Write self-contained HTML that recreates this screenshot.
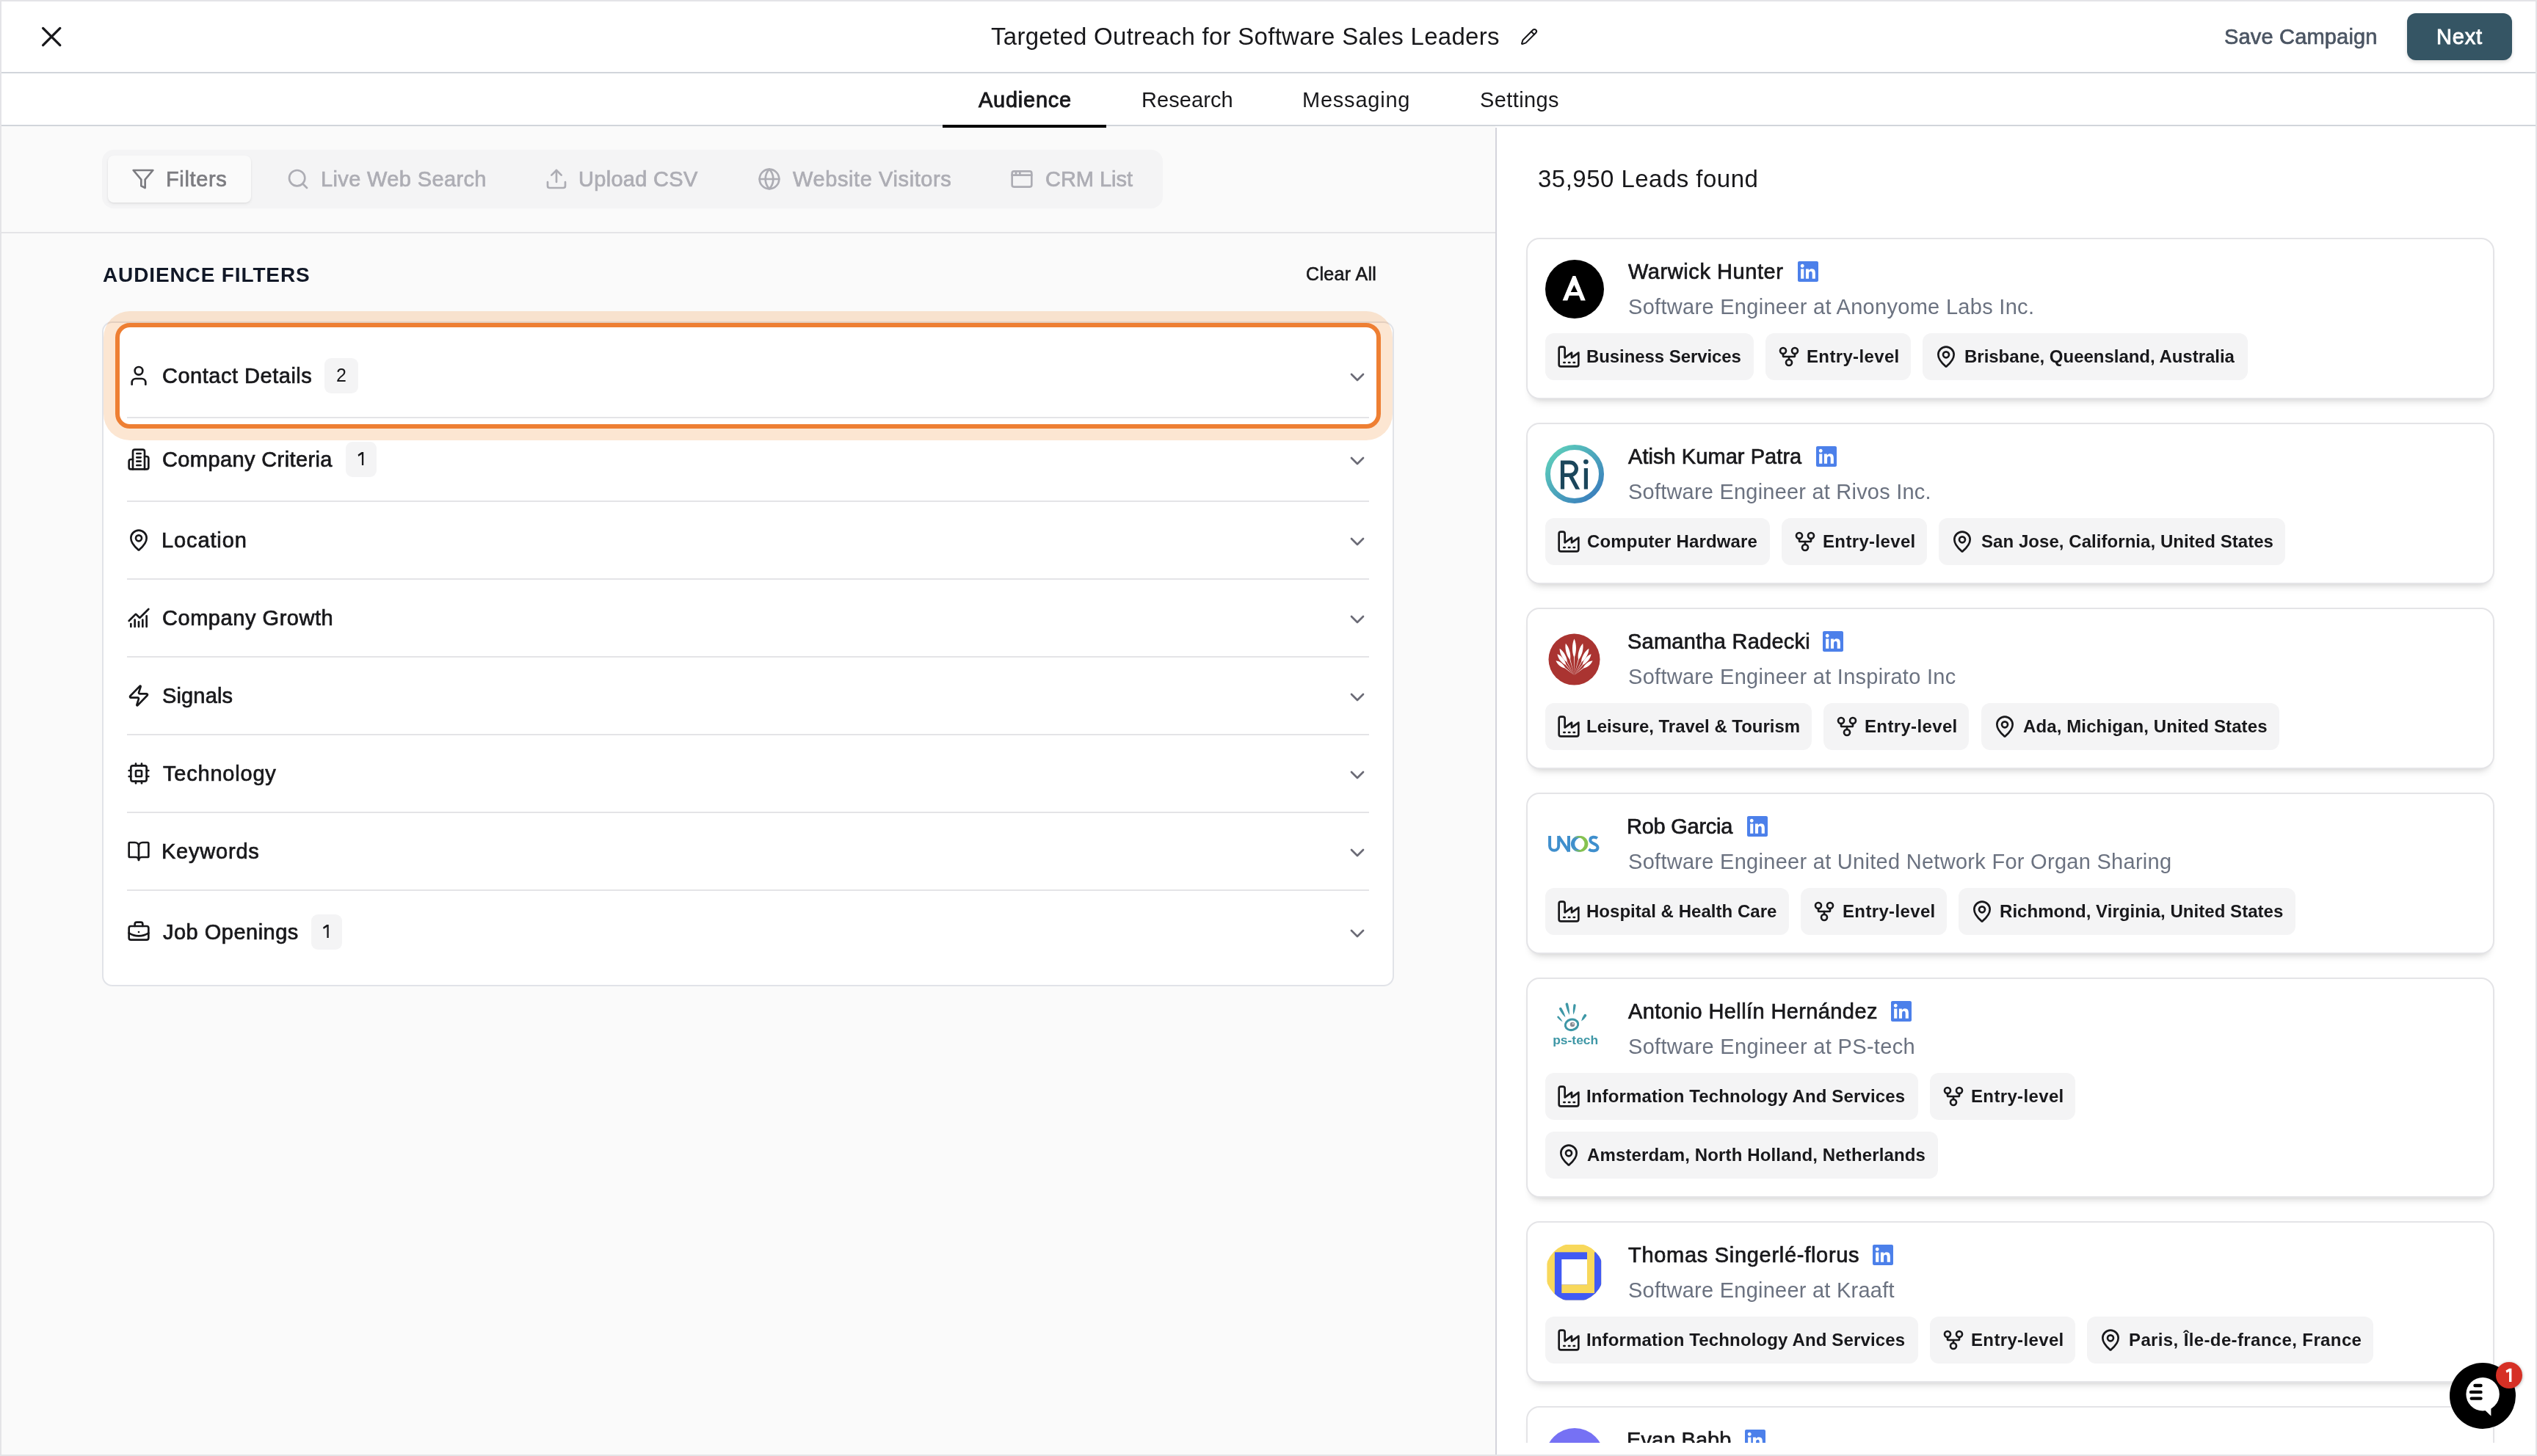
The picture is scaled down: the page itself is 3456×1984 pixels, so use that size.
<!DOCTYPE html><html lang="en"><head><meta charset="utf-8"><title>Campaign Audience</title><style>
*{box-sizing:border-box;margin:0;padding:0}
html,body{width:3456px;height:1984px;overflow:hidden;background:#fff}
body{font-family:"Liberation Sans", sans-serif;position:relative;color:#18181b}
#root{position:absolute;left:0;top:0;width:3456px;height:1984px;transform:translateZ(0)}
#frame{position:absolute;left:0;top:0;width:3456px;height:1984px;border:2px solid #e4e4e7;pointer-events:none;z-index:50}
.t{position:absolute;white-space:nowrap;line-height:1em;display:block;will-change:transform}
.ic{position:absolute;display:block;overflow:visible}
header{position:absolute;left:2px;top:2px;width:3452px;height:98px;background:#fff;border-bottom:2px solid #d1d5db}
nav{position:absolute;left:2px;top:100px;width:3452px;height:72px;background:#fff;border-bottom:2px solid #d1d5db}
.abs{position:absolute;left:0;top:0}
#next{position:absolute;left:3279px;top:18px;width:143px;height:64px;border-radius:12px;background:#355564;box-shadow:0 2px 4px rgba(0,0,0,.10),0 4px 8px -2px rgba(0,0,0,.08)}
#underline{position:absolute;left:1284px;top:170px;width:223px;height:4px;background:#000;z-index:3}
#left{position:absolute;left:2px;top:172px;width:2035px;height:1810px;background:#fafafa}
#divider{position:absolute;left:2037px;top:174px;width:2px;height:1808px;background:#d4d4dc}
#tbline{position:absolute;left:2px;top:316px;width:2035px;height:2px;background:#e4e4e7}
#seg{position:absolute;left:139px;top:204px;width:1445px;height:80px;border-radius:16px;background:#f4f4f5}
#pill{position:absolute;left:147px;top:212px;width:195px;height:64px;border-radius:8px;background:#fafafa;box-shadow:0 2px 4px rgba(0,0,0,.06),0 1px 2px rgba(0,0,0,.05)}
#panel{position:absolute;left:139px;top:438px;width:1760px;height:906px;border:2px solid #e1e3e8;border-radius:14px;background:#fff}
#hl{position:absolute;left:157px;top:440px;width:1724px;height:144px;border:6px solid #ee7f33;border-radius:20px;box-shadow:0 0 0 16px rgba(240,128,32,.2);pointer-events:none}
.sep{position:absolute;left:173px;width:1692px;height:2px;background:#e4e4e7}
.badge{position:absolute;height:48px;border-radius:9px;background:#f4f4f5}
#scroller{position:absolute;left:2039px;top:174px;width:1415px;height:1792px;overflow:hidden;background:#fff}
.card{position:absolute;width:1319px;border:2px solid #e4e4e7;border-radius:18px;background:#fff;box-shadow:0 10px 12px -8px rgba(0,0,0,.16),0 4px 8px -6px rgba(0,0,0,.1)}
.tag{position:absolute;height:64px;border-radius:12px;background:#f4f4f5}
#chat{position:absolute;left:3337px;top:1857px;width:90px;height:90px;z-index:40}
</style></head><body><div id="root">
<header><div class="abs" style="left:-2px;top:-2px">
<svg class="ic" style="left:50px;top:30px" width="40" height="40" viewBox="0 0 40 40" fill="none" stroke="#18181b" stroke-width="3.3" stroke-linecap="round"><path d="M8.6 8.4 31.8 31.6M31.8 8.4 8.6 31.6"/></svg>
<svg class="ic" style="left:2071px;top:38px" width="24" height="24" viewBox="0 0 24 24" fill="none" stroke="#18181b" stroke-width="2" stroke-linecap="round" stroke-linejoin="round"><path d="M21.174 6.812a1 1 0 0 0-3.986-3.987L3.842 16.174a2 2 0 0 0-.5.83l-1.321 4.352a.5.5 0 0 0 .623.622l4.353-1.32a2 2 0 0 0 .83-.497z"/><path d="m15 5 4 4"/></svg>
<span class="t " style="left:1349.70px;top:33px;font-size:33px;color:#18181b;letter-spacing:0.278px;">Targeted Outreach for Software Sales Leaders</span>
<span class="t " style="left:3030.35px;top:36px;font-size:29px;color:#4b5563;letter-spacing:0.174px;-webkit-text-stroke:0.7px #4b5563;">Save Campaign</span>
<div id="next"></div>
<span class="t " style="left:3318.95px;top:36px;font-size:29px;color:#ffffff;letter-spacing:0.843px;-webkit-text-stroke:0.9px #ffffff;">Next</span>
</div></header>
<nav><div class="abs" style="left:-2px;top:-100px">
<span class="t " style="left:1333.45px;top:122px;font-size:29px;color:#18181b;letter-spacing:0.757px;-webkit-text-stroke:0.9px #18181b;">Audience</span>
<span class="t " style="left:1554.60px;top:122px;font-size:29px;color:#18181b;letter-spacing:0.074px;">Research</span>
<span class="t " style="left:1773.70px;top:122px;font-size:29px;color:#18181b;letter-spacing:0.773px;">Messaging</span>
<span class="t " style="left:2015.50px;top:122px;font-size:29px;color:#18181b;letter-spacing:0.388px;">Settings</span>
</div></nav><div id="underline"></div>
<section id="left"></section><div id="tbline"></div><div id="seg"></div><div id="pill"></div>
<svg class="ic" style="left:179px;top:228px" width="32" height="32" viewBox="0 0 24 24" fill="none" stroke="#7c7c81" stroke-width="2" stroke-linecap="round" stroke-linejoin="round"><polygon points="22 3 2 3 10 12.46 10 19 14 21 14 12.46 22 3"/></svg>
<svg class="ic" style="left:390px;top:228px" width="32" height="32" viewBox="0 0 24 24" fill="none" stroke="#adadb4" stroke-width="2" stroke-linecap="round" stroke-linejoin="round"><circle cx="11" cy="11" r="8"/><path d="m21 21-4.3-4.3"/></svg>
<svg class="ic" style="left:741.5px;top:228px" width="32" height="32" viewBox="0 0 24 24" fill="none" stroke="#adadb4" stroke-width="2" stroke-linecap="round" stroke-linejoin="round"><path d="M21 15v4a2 2 0 0 1-2 2H5a2 2 0 0 1-2-2v-4"/><polyline points="17 8 12 3 7 8"/><line x1="12" x2="12" y1="3" y2="15"/></svg>
<svg class="ic" style="left:1031.6px;top:228px" width="32" height="32" viewBox="0 0 24 24" fill="none" stroke="#adadb4" stroke-width="2" stroke-linecap="round" stroke-linejoin="round"><circle cx="12" cy="12" r="10"/><path d="M12 2a14.5 14.5 0 0 0 0 20 14.5 14.5 0 0 0 0-20"/><path d="M2 12h20"/></svg>
<svg class="ic" style="left:1376px;top:228px" width="32" height="32" viewBox="0 0 24 24" fill="none" stroke="#adadb4" stroke-width="2" stroke-linecap="round" stroke-linejoin="round"><rect x="2" y="4" width="20" height="16" rx="2"/><path d="M10 4v4"/><path d="M2 8h20"/><path d="M6 4v4"/></svg>
<span class="t " style="left:226.35px;top:230px;font-size:29px;color:#7c7c81;letter-spacing:0.643px;-webkit-text-stroke:0.7px #7c7c81;">Filters</span>
<span class="t " style="left:436.85px;top:230px;font-size:29px;color:#adadb4;letter-spacing:0.366px;-webkit-text-stroke:0.7px #adadb4;">Live Web Search</span>
<span class="t " style="left:788.35px;top:230px;font-size:29px;color:#adadb4;letter-spacing:0.295px;-webkit-text-stroke:0.7px #adadb4;">Upload CSV</span>
<span class="t " style="left:1080.35px;top:230px;font-size:29px;color:#adadb4;letter-spacing:0.598px;-webkit-text-stroke:0.7px #adadb4;">Website Visitors</span>
<span class="t " style="left:1424.35px;top:230px;font-size:29px;color:#adadb4;letter-spacing:-0.039px;-webkit-text-stroke:0.7px #adadb4;">CRM List</span>
<span class="t " style="left:139.80px;top:361px;font-size:28px;color:#111827;font-weight:700;letter-spacing:0.872px;">AUDIENCE FILTERS</span>
<span class="t " style="left:1778.80px;top:361px;font-size:25px;color:#18181b;letter-spacing:0.348px;-webkit-text-stroke:0.6px #18181b;">Clear All</span>
<div id="panel"></div>
<svg class="ic" style="left:173px;top:496.0px" width="32" height="32" viewBox="0 0 24 24" fill="none" stroke="#18181b" stroke-width="2" stroke-linecap="round" stroke-linejoin="round"><path d="M19 21v-2a4 4 0 0 0-4-4H9a4 4 0 0 0-4 4v2"/><circle cx="12" cy="7" r="4"/></svg>
<svg class="ic" style="left:1833px;top:498.0px" width="32" height="32" viewBox="0 0 24 24" fill="none" stroke="#6b6b76" stroke-width="2" stroke-linecap="round" stroke-linejoin="round"><path d="m6 9 6 6 6-6"/></svg>
<div class="badge" style="left:442.0px;top:488.0px;width:46px"></div>
<div class="sep" style="top:568px"></div>
<svg class="ic" style="left:173px;top:610.0px" width="32" height="32" viewBox="0 0 24 24" fill="none" stroke="#18181b" stroke-width="2" stroke-linecap="round" stroke-linejoin="round"><path d="M6 22V4a2 2 0 0 1 2-2h8a2 2 0 0 1 2 2v18Z"/><path d="M6 12H4a2 2 0 0 0-2 2v6a2 2 0 0 0 2 2h2"/><path d="M18 9h2a2 2 0 0 1 2 2v9a2 2 0 0 1-2 2h-2"/><path d="M10 6h4"/><path d="M10 10h4"/><path d="M10 14h4"/><path d="M10 18h4"/></svg>
<svg class="ic" style="left:1833px;top:612.0px" width="32" height="32" viewBox="0 0 24 24" fill="none" stroke="#6b6b76" stroke-width="2" stroke-linecap="round" stroke-linejoin="round"><path d="m6 9 6 6 6-6"/></svg>
<div class="badge" style="left:471.0px;top:602.0px;width:42px"></div>
<svg class="ic" style="left:0;top:0" width="1" height="1"><polygon fill="#18181b" points="492.60,616.00 495.20,616.00 495.20,634.00 492.90,634.00 492.90,619.10 488.30,621.90 487.60,619.60"/></svg>
<div class="sep" style="top:682px"></div>
<svg class="ic" style="left:173px;top:720.0px" width="32" height="32" viewBox="0 0 24 24" fill="none" stroke="#18181b" stroke-width="2" stroke-linecap="round" stroke-linejoin="round"><path d="M20 10c0 4.993-5.539 10.193-7.399 11.799a1 1 0 0 1-1.202 0C9.539 20.193 4 14.993 4 10a8 8 0 0 1 16 0"/><circle cx="12" cy="10" r="3"/></svg>
<svg class="ic" style="left:1833px;top:722.0px" width="32" height="32" viewBox="0 0 24 24" fill="none" stroke="#6b6b76" stroke-width="2" stroke-linecap="round" stroke-linejoin="round"><path d="m6 9 6 6 6-6"/></svg>
<div class="sep" style="top:788px"></div>
<svg class="ic" style="left:173px;top:826.0px" width="32" height="32" viewBox="0 0 24 24" fill="none" stroke="#18181b" stroke-width="2" stroke-linecap="round" stroke-linejoin="round"><path d="M12 16v5"/><path d="M16 14v7"/><path d="M20 10v11"/><path d="m22 3-8.646 8.646a.5.5 0 0 1-.708 0L9.354 8.354a.5.5 0 0 0-.707 0L2 15"/><path d="M4 18v3"/><path d="M8 14v7"/></svg>
<svg class="ic" style="left:1833px;top:828.0px" width="32" height="32" viewBox="0 0 24 24" fill="none" stroke="#6b6b76" stroke-width="2" stroke-linecap="round" stroke-linejoin="round"><path d="m6 9 6 6 6-6"/></svg>
<div class="sep" style="top:894px"></div>
<svg class="ic" style="left:173px;top:932.0px" width="32" height="32" viewBox="0 0 24 24" fill="none" stroke="#18181b" stroke-width="2" stroke-linecap="round" stroke-linejoin="round"><path d="M4 14a1 1 0 0 1-.78-1.63l9.9-10.2a.5.5 0 0 1 .86.46l-1.92 6.02A1 1 0 0 0 13 10h7a1 1 0 0 1 .78 1.63l-9.9 10.2a.5.5 0 0 1-.86-.46l1.92-6.02A1 1 0 0 0 11 14z"/></svg>
<svg class="ic" style="left:1833px;top:934.0px" width="32" height="32" viewBox="0 0 24 24" fill="none" stroke="#6b6b76" stroke-width="2" stroke-linecap="round" stroke-linejoin="round"><path d="m6 9 6 6 6-6"/></svg>
<div class="sep" style="top:1000px"></div>
<svg class="ic" style="left:173px;top:1038.0px" width="32" height="32" viewBox="0 0 24 24" fill="none" stroke="#18181b" stroke-width="2" stroke-linecap="round" stroke-linejoin="round"><rect width="16" height="16" x="4" y="4" rx="2"/><rect width="6" height="6" x="9" y="9" rx="1"/><path d="M15 2v2"/><path d="M15 20v2"/><path d="M2 15h2"/><path d="M2 9h2"/><path d="M20 15h2"/><path d="M20 9h2"/><path d="M9 2v2"/><path d="M9 20v2"/></svg>
<svg class="ic" style="left:1833px;top:1040.0px" width="32" height="32" viewBox="0 0 24 24" fill="none" stroke="#6b6b76" stroke-width="2" stroke-linecap="round" stroke-linejoin="round"><path d="m6 9 6 6 6-6"/></svg>
<div class="sep" style="top:1106px"></div>
<svg class="ic" style="left:173px;top:1144.0px" width="32" height="32" viewBox="0 0 24 24" fill="none" stroke="#18181b" stroke-width="2" stroke-linecap="round" stroke-linejoin="round"><path d="M12 7v14"/><path d="M3 18a1 1 0 0 1-1-1V4a1 1 0 0 1 1-1h5a4 4 0 0 1 4 4 4 4 0 0 1 4-4h5a1 1 0 0 1 1 1v13a1 1 0 0 1-1 1h-6a3 3 0 0 0-3 3 3 3 0 0 0-3-3z"/></svg>
<svg class="ic" style="left:1833px;top:1146.0px" width="32" height="32" viewBox="0 0 24 24" fill="none" stroke="#6b6b76" stroke-width="2" stroke-linecap="round" stroke-linejoin="round"><path d="m6 9 6 6 6-6"/></svg>
<div class="sep" style="top:1212px"></div>
<svg class="ic" style="left:173px;top:1254.0px" width="32" height="32" viewBox="0 0 24 24" fill="none" stroke="#18181b" stroke-width="2" stroke-linecap="round" stroke-linejoin="round"><path d="M12 12h.01"/><path d="M16 6V4a2 2 0 0 0-2-2h-4a2 2 0 0 0-2 2v2"/><path d="M22 13a18.15 18.15 0 0 1-20 0"/><rect width="20" height="14" x="2" y="6" rx="2"/></svg>
<svg class="ic" style="left:1833px;top:1256.0px" width="32" height="32" viewBox="0 0 24 24" fill="none" stroke="#6b6b76" stroke-width="2" stroke-linecap="round" stroke-linejoin="round"><path d="m6 9 6 6 6-6"/></svg>
<div class="badge" style="left:423.5px;top:1246.0px;width:42px"></div>
<svg class="ic" style="left:0;top:0" width="1" height="1"><polygon fill="#18181b" points="445.10,1260.00 447.70,1260.00 447.70,1278.00 445.40,1278.00 445.40,1263.10 440.80,1265.90 440.10,1263.60"/></svg>
<span class="t " style="left:221.35px;top:498px;font-size:29px;color:#18181b;letter-spacing:0.511px;-webkit-text-stroke:0.7px #18181b;">Contact Details</span>
<span class="t " style="left:457.80px;top:499px;font-size:25px;color:#18181b;">2</span>
<span class="t " style="left:221.35px;top:612px;font-size:29px;color:#18181b;letter-spacing:0.387px;-webkit-text-stroke:0.7px #18181b;">Company Criteria</span>
<span class="t " style="left:220.35px;top:722px;font-size:29px;color:#18181b;letter-spacing:0.884px;-webkit-text-stroke:0.7px #18181b;">Location</span>
<span class="t " style="left:221.35px;top:828px;font-size:29px;color:#18181b;letter-spacing:0.545px;-webkit-text-stroke:0.7px #18181b;">Company Growth</span>
<span class="t " style="left:221.35px;top:934px;font-size:29px;color:#18181b;letter-spacing:0.148px;-webkit-text-stroke:0.7px #18181b;">Signals</span>
<span class="t " style="left:222.35px;top:1040px;font-size:29px;color:#18181b;letter-spacing:0.787px;-webkit-text-stroke:0.7px #18181b;">Technology</span>
<span class="t " style="left:220.35px;top:1146px;font-size:29px;color:#18181b;letter-spacing:0.782px;-webkit-text-stroke:0.7px #18181b;">Keywords</span>
<span class="t " style="left:222.35px;top:1256px;font-size:29px;color:#18181b;letter-spacing:0.486px;-webkit-text-stroke:0.7px #18181b;">Job Openings</span>
<div id="hl"></div>
<div id="divider"></div><section id="scroller">
<span class="t " style="left:55.90px;top:53px;font-size:33px;color:#18181b;letter-spacing:0.476px;">35,950 Leads found</span>
<div class="card" style="left:40px;top:150px;height:220px"></div>
<svg class="ic" style="left:66px;top:180px" width="80" height="80" viewBox="0 0 80 80"><circle cx="40" cy="40" r="40" fill="#000"/><path fill="#fff" fill-rule="evenodd" d="M23.6 55.4 37.5 21.9h3.8l13.5 33.500h-6.3l-2.6-6.700H32.7l-2.4 6.700zM34.700 44h9.3l-4.600-9.800z"/></svg>
<svg class="ic" style="left:410.0px;top:182px" width="28" height="28" viewBox="0 0 24 24"><rect x="1" y="1" width="22" height="22" fill="#fff"/><path fill="#4c80ea" d="M20.447 20.452h-3.554v-5.569c0-1.328-.027-3.037-1.852-3.037-1.853 0-2.136 1.445-2.136 2.939v5.667H9.351V9h3.414v1.561h.046c.477-.9 1.637-1.85 3.37-1.85 3.601 0 4.267 2.37 4.267 5.455v6.286zM5.337 7.433c-1.144 0-2.063-.926-2.063-2.065 0-1.138.92-2.063 2.063-2.063 1.14 0 2.064.925 2.064 2.063 0 1.139-.925 2.065-2.064 2.065zm1.782 13.019H3.555V9h3.564v11.452zM22.225 0H1.771C.792 0 0 .774 0 1.729v20.542C0 23.227.792 24 1.771 24h20.451C23.2 24 24 23.227 24 22.271V1.729C24 .774 23.2 0 22.222 0h.003z"/></svg>
<div class="tag" style="left:66.0px;top:280px;width:283.6px"></div>
<svg class="ic" style="left:82px;top:296px" width="32" height="32" viewBox="0 0 24 24" fill="none" stroke="#18181b" stroke-width="2" stroke-linecap="round" stroke-linejoin="round"><path d="M2 20a2 2 0 0 0 2 2h16a2 2 0 0 0 2-2V8l-7 5V8l-7 5V4a2 2 0 0 0-2-2H4a2 2 0 0 0-2 2Z"/><path d="M17 18h1"/><path d="M12 18h1"/><path d="M7 18h1"/></svg>
<div class="tag" style="left:365.8px;top:280px;width:198.4px"></div>
<svg class="ic" style="left:381.8000000000002px;top:296px" width="32" height="32" viewBox="0 0 24 24" fill="none" stroke="#18181b" stroke-width="2" stroke-linecap="round" stroke-linejoin="round"><circle cx="12" cy="18" r="3"/><circle cx="6" cy="6" r="3"/><circle cx="18" cy="6" r="3"/><path d="M18 9v2c0 .6-.4 1-1 1H7c-.6 0-1-.4-1-1V9"/><path d="M12 12v3"/></svg>
<div class="tag" style="left:580.4px;top:280px;width:442.5px"></div>
<svg class="ic" style="left:596.4000000000001px;top:296px" width="32" height="32" viewBox="0 0 24 24" fill="none" stroke="#18181b" stroke-width="2" stroke-linecap="round" stroke-linejoin="round"><path d="M20 10c0 4.993-5.539 10.193-7.399 11.799a1 1 0 0 1-1.202 0C9.539 20.193 4 14.993 4 10a8 8 0 0 1 16 0"/><circle cx="12" cy="10" r="3"/></svg>
<span class="t " style="left:179.05px;top:182px;font-size:29px;color:#18181b;letter-spacing:0.569px;-webkit-text-stroke:0.7px #18181b;">Warwick Hunter</span>
<span class="t " style="left:178.50px;top:230px;font-size:29px;color:#6b7280;letter-spacing:0.297px;">Software Engineer at Anonyome Labs Inc.</span>
<span class="t " style="left:122.30px;top:300px;font-size:24px;color:#18181b;font-weight:700;letter-spacing:-0.074px;">Business Services</span>
<span class="t " style="left:422.10px;top:300px;font-size:24px;color:#18181b;font-weight:700;letter-spacing:0.355px;">Entry-level</span>
<span class="t " style="left:636.70px;top:300px;font-size:24px;color:#18181b;font-weight:700;letter-spacing:-0.020px;">Brisbane, Queensland, Australia</span>
<div class="card" style="left:40px;top:402px;height:220px"></div>
<svg class="ic" style="left:66px;top:432px" width="80" height="80" viewBox="0 0 80 80"><defs><linearGradient id="rg" x1="0.1" y1="0.1" x2="0.9" y2="0.95"><stop offset="0" stop-color="#5ccbbb"/><stop offset="1" stop-color="#3a7ebd"/></linearGradient></defs><circle cx="40" cy="40" r="36.5" fill="#fff" stroke="url(#rg)" stroke-width="7"/><clipPath id="rc"><rect x="0" y="0" width="80" height="60.8"/></clipPath><g fill="none" stroke="#1b465b" stroke-width="5.2" clip-path="url(#rc)"><path d="M23.5 60.8V21.6M23.5 24.2h10.3a8.6 8.6 0 0 1 0 17.2H23.5M34 41.6l12 22.400M55.4 31.9v28.9"/></g><circle cx="55.4" cy="23.2" r="3.3" fill="#1b465b"/></svg>
<svg class="ic" style="left:434.9px;top:434px" width="28" height="28" viewBox="0 0 24 24"><rect x="1" y="1" width="22" height="22" fill="#fff"/><path fill="#4c80ea" d="M20.447 20.452h-3.554v-5.569c0-1.328-.027-3.037-1.852-3.037-1.853 0-2.136 1.445-2.136 2.939v5.667H9.351V9h3.414v1.561h.046c.477-.9 1.637-1.85 3.37-1.85 3.601 0 4.267 2.37 4.267 5.455v6.286zM5.337 7.433c-1.144 0-2.063-.926-2.063-2.065 0-1.138.92-2.063 2.063-2.063 1.14 0 2.064.925 2.064 2.063 0 1.139-.925 2.065-2.064 2.065zm1.782 13.019H3.555V9h3.564v11.452zM22.225 0H1.771C.792 0 0 .774 0 1.729v20.542C0 23.227.792 24 1.771 24h20.451C23.2 24 24 23.227 24 22.271V1.729C24 .774 23.2 0 22.222 0h.003z"/></svg>
<div class="tag" style="left:66.0px;top:532px;width:305.6px"></div>
<svg class="ic" style="left:82px;top:548px" width="32" height="32" viewBox="0 0 24 24" fill="none" stroke="#18181b" stroke-width="2" stroke-linecap="round" stroke-linejoin="round"><path d="M2 20a2 2 0 0 0 2 2h16a2 2 0 0 0 2-2V8l-7 5V8l-7 5V4a2 2 0 0 0-2-2H4a2 2 0 0 0-2 2Z"/><path d="M17 18h1"/><path d="M12 18h1"/><path d="M7 18h1"/></svg>
<div class="tag" style="left:387.8px;top:532px;width:198.4px"></div>
<svg class="ic" style="left:403.8000000000002px;top:548px" width="32" height="32" viewBox="0 0 24 24" fill="none" stroke="#18181b" stroke-width="2" stroke-linecap="round" stroke-linejoin="round"><circle cx="12" cy="18" r="3"/><circle cx="6" cy="6" r="3"/><circle cx="18" cy="6" r="3"/><path d="M18 9v2c0 .6-.4 1-1 1H7c-.6 0-1-.4-1-1V9"/><path d="M12 12v3"/></svg>
<div class="tag" style="left:602.4px;top:532px;width:471.6px"></div>
<svg class="ic" style="left:618.4000000000001px;top:548px" width="32" height="32" viewBox="0 0 24 24" fill="none" stroke="#18181b" stroke-width="2" stroke-linecap="round" stroke-linejoin="round"><path d="M20 10c0 4.993-5.539 10.193-7.399 11.799a1 1 0 0 1-1.202 0C9.539 20.193 4 14.993 4 10a8 8 0 0 1 16 0"/><circle cx="12" cy="10" r="3"/></svg>
<span class="t " style="left:179.05px;top:434px;font-size:29px;color:#18181b;letter-spacing:0.057px;-webkit-text-stroke:0.7px #18181b;">Atish Kumar Patra</span>
<span class="t " style="left:178.50px;top:482px;font-size:29px;color:#6b7280;letter-spacing:0.212px;">Software Engineer at Rivos Inc.</span>
<span class="t " style="left:123.30px;top:552px;font-size:24px;color:#18181b;font-weight:700;letter-spacing:0.160px;">Computer Hardware</span>
<span class="t " style="left:444.10px;top:552px;font-size:24px;color:#18181b;font-weight:700;letter-spacing:0.355px;">Entry-level</span>
<span class="t " style="left:659.70px;top:552px;font-size:24px;color:#18181b;font-weight:700;letter-spacing:0.054px;">San Jose, California, United States</span>
<div class="card" style="left:40px;top:654px;height:220px"></div>
<svg class="ic" style="left:66px;top:684px" width="80" height="80" viewBox="0 0 80 80"><circle cx="39.5" cy="40.6" r="35" fill="#aa3431"/><g fill="#fff" transform="translate(39.5 62.1)"><path transform="rotate(0)" d="M0 0L-0.45 -24.75C-3.24 -31.68 -3.24 -42.57 0 -49.50C3.24 -42.57 3.24 -31.68 0.45 -24.75Z"/><path transform="rotate(15.1)" d="M0 0L-0.45 -22.40C-3.24 -28.67 -3.24 -38.53 0 -44.80C3.24 -38.53 3.24 -28.67 0.45 -22.40Z"/><path transform="rotate(-15.1)" d="M0 0L-0.45 -22.40C-3.24 -28.67 -3.24 -38.53 0 -44.80C3.24 -38.53 3.24 -28.67 0.45 -22.40Z"/><path transform="rotate(28.7)" d="M0 0L-0.45 -20.75C-3.24 -26.56 -3.24 -35.69 0 -41.50C3.24 -35.69 3.24 -26.56 0.45 -20.75Z"/><path transform="rotate(-28.7)" d="M0 0L-0.45 -20.75C-3.24 -26.56 -3.24 -35.69 0 -41.50C3.24 -35.69 3.24 -26.56 0.45 -20.75Z"/><path transform="rotate(38.6)" d="M0 0L-0.45 -18.45C-3.10 -23.62 -3.10 -31.73 0 -36.90C3.10 -31.73 3.10 -23.62 0.45 -18.45Z"/><path transform="rotate(-38.6)" d="M0 0L-0.45 -18.45C-3.10 -23.62 -3.10 -31.73 0 -36.90C3.10 -31.73 3.10 -23.62 0.45 -18.45Z"/><path transform="rotate(51.5)" d="M0 0L-0.45 -16.00C-2.84 -20.48 -2.84 -27.52 0 -32.00C2.84 -27.52 2.84 -20.48 0.45 -16.00Z"/><path transform="rotate(-51.5)" d="M0 0L-0.45 -16.00C-2.84 -20.48 -2.84 -27.52 0 -32.00C2.84 -27.52 2.84 -20.48 0.45 -16.00Z"/></g></svg>
<svg class="ic" style="left:443.7px;top:686px" width="28" height="28" viewBox="0 0 24 24"><rect x="1" y="1" width="22" height="22" fill="#fff"/><path fill="#4c80ea" d="M20.447 20.452h-3.554v-5.569c0-1.328-.027-3.037-1.852-3.037-1.853 0-2.136 1.445-2.136 2.939v5.667H9.351V9h3.414v1.561h.046c.477-.9 1.637-1.85 3.37-1.85 3.601 0 4.267 2.37 4.267 5.455v6.286zM5.337 7.433c-1.144 0-2.063-.926-2.063-2.065 0-1.138.92-2.063 2.063-2.063 1.14 0 2.064.925 2.064 2.063 0 1.139-.925 2.065-2.064 2.065zm1.782 13.019H3.555V9h3.564v11.452zM22.225 0H1.771C.792 0 0 .774 0 1.729v20.542C0 23.227.792 24 1.771 24h20.451C23.2 24 24 23.227 24 22.271V1.729C24 .774 23.2 0 22.222 0h.003z"/></svg>
<div class="tag" style="left:66.0px;top:784px;width:362.8px"></div>
<svg class="ic" style="left:82px;top:800px" width="32" height="32" viewBox="0 0 24 24" fill="none" stroke="#18181b" stroke-width="2" stroke-linecap="round" stroke-linejoin="round"><path d="M2 20a2 2 0 0 0 2 2h16a2 2 0 0 0 2-2V8l-7 5V8l-7 5V4a2 2 0 0 0-2-2H4a2 2 0 0 0-2 2Z"/><path d="M17 18h1"/><path d="M12 18h1"/><path d="M7 18h1"/></svg>
<div class="tag" style="left:445.0px;top:784px;width:198.4px"></div>
<svg class="ic" style="left:461.0px;top:800px" width="32" height="32" viewBox="0 0 24 24" fill="none" stroke="#18181b" stroke-width="2" stroke-linecap="round" stroke-linejoin="round"><circle cx="12" cy="18" r="3"/><circle cx="6" cy="6" r="3"/><circle cx="18" cy="6" r="3"/><path d="M18 9v2c0 .6-.4 1-1 1H7c-.6 0-1-.4-1-1V9"/><path d="M12 12v3"/></svg>
<div class="tag" style="left:659.6px;top:784px;width:406.2px"></div>
<svg class="ic" style="left:675.5999999999999px;top:800px" width="32" height="32" viewBox="0 0 24 24" fill="none" stroke="#18181b" stroke-width="2" stroke-linecap="round" stroke-linejoin="round"><path d="M20 10c0 4.993-5.539 10.193-7.399 11.799a1 1 0 0 1-1.202 0C9.539 20.193 4 14.993 4 10a8 8 0 0 1 16 0"/><circle cx="12" cy="10" r="3"/></svg>
<span class="t " style="left:178.05px;top:686px;font-size:29px;color:#18181b;letter-spacing:0.248px;-webkit-text-stroke:0.7px #18181b;">Samantha Radecki</span>
<span class="t " style="left:178.50px;top:734px;font-size:29px;color:#6b7280;letter-spacing:0.283px;">Software Engineer at Inspirato Inc</span>
<span class="t " style="left:122.30px;top:804px;font-size:24px;color:#18181b;font-weight:700;letter-spacing:-0.022px;">Leisure, Travel &amp; Tourism</span>
<span class="t " style="left:501.30px;top:804px;font-size:24px;color:#18181b;font-weight:700;letter-spacing:0.355px;">Entry-level</span>
<span class="t " style="left:716.90px;top:804px;font-size:24px;color:#18181b;font-weight:700;letter-spacing:0.117px;">Ada, Michigan, United States</span>
<div class="card" style="left:40px;top:906px;height:220px"></div>
<svg class="ic" style="left:66px;top:936px" width="80" height="80" viewBox="0 0 80 80"><defs><mask id="mb" maskUnits="userSpaceOnUse" x="0" y="0" width="80" height="80"><rect width="80" height="80" fill="#fff"/><circle cx="48.6" cy="39.9" r="8.4" fill="#000"/></mask><mask id="mg" maskUnits="userSpaceOnUse" x="0" y="0" width="80" height="80"><rect width="80" height="80" fill="#fff"/><circle cx="44.7" cy="39.9" r="8.800" fill="#000"/></mask></defs><g fill="none" stroke="#3f8fcd" stroke-width="4"><path d="M6.1 29v13.7a6.05 6.05 0 0 0 12.1 0V29M18.2 29.6 32 50.2M32 29v21.8"/><path d="M70.9 32.2C68.100 30 61.3 29.6 61.3 34.7c0 5.4 10.200 4.4 10.200 10.3 0 5.2-8.400 5.4-12.200 2.300"/></g><circle cx="45.8" cy="39.9" r="10.9" fill="#3f8fcd" mask="url(#mb)"/><circle cx="47.5" cy="39.9" r="10.9" fill="#86c250" mask="url(#mg)"/></svg>
<svg class="ic" style="left:341.3px;top:938px" width="28" height="28" viewBox="0 0 24 24"><rect x="1" y="1" width="22" height="22" fill="#fff"/><path fill="#4c80ea" d="M20.447 20.452h-3.554v-5.569c0-1.328-.027-3.037-1.852-3.037-1.853 0-2.136 1.445-2.136 2.939v5.667H9.351V9h3.414v1.561h.046c.477-.9 1.637-1.85 3.37-1.85 3.601 0 4.267 2.37 4.267 5.455v6.286zM5.337 7.433c-1.144 0-2.063-.926-2.063-2.065 0-1.138.92-2.063 2.063-2.063 1.14 0 2.064.925 2.064 2.063 0 1.139-.925 2.065-2.064 2.065zm1.782 13.019H3.555V9h3.564v11.452zM22.225 0H1.771C.792 0 0 .774 0 1.729v20.542C0 23.227.792 24 1.771 24h20.451C23.2 24 24 23.227 24 22.271V1.729C24 .774 23.2 0 22.222 0h.003z"/></svg>
<div class="tag" style="left:66.0px;top:1036px;width:332.0px"></div>
<svg class="ic" style="left:82px;top:1052px" width="32" height="32" viewBox="0 0 24 24" fill="none" stroke="#18181b" stroke-width="2" stroke-linecap="round" stroke-linejoin="round"><path d="M2 20a2 2 0 0 0 2 2h16a2 2 0 0 0 2-2V8l-7 5V8l-7 5V4a2 2 0 0 0-2-2H4a2 2 0 0 0-2 2Z"/><path d="M17 18h1"/><path d="M12 18h1"/><path d="M7 18h1"/></svg>
<div class="tag" style="left:414.2px;top:1036px;width:198.4px"></div>
<svg class="ic" style="left:430.1999999999998px;top:1052px" width="32" height="32" viewBox="0 0 24 24" fill="none" stroke="#18181b" stroke-width="2" stroke-linecap="round" stroke-linejoin="round"><circle cx="12" cy="18" r="3"/><circle cx="6" cy="6" r="3"/><circle cx="18" cy="6" r="3"/><path d="M18 9v2c0 .6-.4 1-1 1H7c-.6 0-1-.4-1-1V9"/><path d="M12 12v3"/></svg>
<div class="tag" style="left:628.8px;top:1036px;width:459.0px"></div>
<svg class="ic" style="left:644.7999999999997px;top:1052px" width="32" height="32" viewBox="0 0 24 24" fill="none" stroke="#18181b" stroke-width="2" stroke-linecap="round" stroke-linejoin="round"><path d="M20 10c0 4.993-5.539 10.193-7.399 11.799a1 1 0 0 1-1.202 0C9.539 20.193 4 14.993 4 10a8 8 0 0 1 16 0"/><circle cx="12" cy="10" r="3"/></svg>
<span class="t " style="left:177.05px;top:938px;font-size:29px;color:#18181b;letter-spacing:-0.249px;-webkit-text-stroke:0.7px #18181b;">Rob Garcia</span>
<span class="t " style="left:178.50px;top:986px;font-size:29px;color:#6b7280;letter-spacing:0.284px;">Software Engineer at United Network For Organ Sharing</span>
<span class="t " style="left:122.30px;top:1056px;font-size:24px;color:#18181b;font-weight:700;letter-spacing:0.030px;">Hospital &amp; Health Care</span>
<span class="t " style="left:470.50px;top:1056px;font-size:24px;color:#18181b;font-weight:700;letter-spacing:0.355px;">Entry-level</span>
<span class="t " style="left:685.10px;top:1056px;font-size:24px;color:#18181b;font-weight:700;letter-spacing:0.044px;">Richmond, Virginia, United States</span>
<div class="card" style="left:40px;top:1158px;height:300px"></div>
<svg class="ic" style="left:66px;top:1188px" width="80" height="80" viewBox="0 0 80 80"><g fill="#3e97a6"><path d="M16.64 24.68A1.30 1.30 0 0 1 18.56 22.92Q22.39 27.04 23.70 30.50Q20.37 28.87 16.64 24.68Z"/><path d="M19.23 13.48A1.80 1.80 0 0 1 22.37 11.72Q26.54 18.93 27.40 24.30Q23.25 20.78 19.23 13.48Z"/><path d="M27.65 6.72A1.80 1.80 0 0 1 31.15 5.88Q33.41 14.91 32.90 20.90Q29.73 15.79 27.65 6.72Z"/><path d="M38.36 7.69A1.65 1.65 0 0 1 41.64 8.11Q40.73 15.99 38.40 20.60Q37.29 15.56 38.36 7.69Z"/><path d="M52.83 20.63A1.90 1.90 0 0 1 55.97 22.77Q52.76 27.66 49.10 29.50Q49.46 25.41 52.83 20.63Z"/></g><ellipse cx="36" cy="34.3" rx="8.8" ry="7.2" transform="rotate(-14 36 34.300)" fill="#fff" stroke="#3e97a6" stroke-width="3"/><circle cx="37" cy="34" r="3.200" fill="#8a8d94"/><circle cx="37.9" cy="32.9" r="1" fill="#e8e8ea"/><text x="10.2" y="60.7" font-family='"Liberation Sans", sans-serif' font-weight="700" font-size="17.2" fill="#3e97a6" textLength="62" lengthAdjust="spacingAndGlyphs">ps-tech</text></svg>
<svg class="ic" style="left:536.7px;top:1190px" width="28" height="28" viewBox="0 0 24 24"><rect x="1" y="1" width="22" height="22" fill="#fff"/><path fill="#4c80ea" d="M20.447 20.452h-3.554v-5.569c0-1.328-.027-3.037-1.852-3.037-1.853 0-2.136 1.445-2.136 2.939v5.667H9.351V9h3.414v1.561h.046c.477-.9 1.637-1.85 3.37-1.85 3.601 0 4.267 2.37 4.267 5.455v6.286zM5.337 7.433c-1.144 0-2.063-.926-2.063-2.065 0-1.138.92-2.063 2.063-2.063 1.14 0 2.064.925 2.064 2.063 0 1.139-.925 2.065-2.064 2.065zm1.782 13.019H3.555V9h3.564v11.452zM22.225 0H1.771C.792 0 0 .774 0 1.729v20.542C0 23.227.792 24 1.771 24h20.451C23.2 24 24 23.227 24 22.271V1.729C24 .774 23.2 0 22.222 0h.003z"/></svg>
<div class="tag" style="left:66.0px;top:1288px;width:507.6px"></div>
<svg class="ic" style="left:82px;top:1304px" width="32" height="32" viewBox="0 0 24 24" fill="none" stroke="#18181b" stroke-width="2" stroke-linecap="round" stroke-linejoin="round"><path d="M2 20a2 2 0 0 0 2 2h16a2 2 0 0 0 2-2V8l-7 5V8l-7 5V4a2 2 0 0 0-2-2H4a2 2 0 0 0-2 2Z"/><path d="M17 18h1"/><path d="M12 18h1"/><path d="M7 18h1"/></svg>
<div class="tag" style="left:589.8px;top:1288px;width:198.4px"></div>
<svg class="ic" style="left:605.8000000000002px;top:1304px" width="32" height="32" viewBox="0 0 24 24" fill="none" stroke="#18181b" stroke-width="2" stroke-linecap="round" stroke-linejoin="round"><circle cx="12" cy="18" r="3"/><circle cx="6" cy="6" r="3"/><circle cx="18" cy="6" r="3"/><path d="M18 9v2c0 .6-.4 1-1 1H7c-.6 0-1-.4-1-1V9"/><path d="M12 12v3"/></svg>
<div class="tag" style="left:66.0px;top:1368px;width:534.5px"></div>
<svg class="ic" style="left:82px;top:1384px" width="32" height="32" viewBox="0 0 24 24" fill="none" stroke="#18181b" stroke-width="2" stroke-linecap="round" stroke-linejoin="round"><path d="M20 10c0 4.993-5.539 10.193-7.399 11.799a1 1 0 0 1-1.202 0C9.539 20.193 4 14.993 4 10a8 8 0 0 1 16 0"/><circle cx="12" cy="10" r="3"/></svg>
<span class="t " style="left:179.05px;top:1190px;font-size:29px;color:#18181b;letter-spacing:0.388px;-webkit-text-stroke:0.7px #18181b;">Antonio Hellín Hernández</span>
<span class="t " style="left:178.50px;top:1238px;font-size:29px;color:#6b7280;letter-spacing:0.318px;">Software Engineer at PS-tech</span>
<span class="t " style="left:122.30px;top:1308px;font-size:24px;color:#18181b;font-weight:700;letter-spacing:0.137px;">Information Technology And Services</span>
<span class="t " style="left:646.10px;top:1308px;font-size:24px;color:#18181b;font-weight:700;letter-spacing:0.355px;">Entry-level</span>
<span class="t " style="left:123.30px;top:1388px;font-size:24px;color:#18181b;font-weight:700;letter-spacing:0.133px;">Amsterdam, North Holland, Netherlands</span>
<div class="card" style="left:40px;top:1490px;height:220px"></div>
<svg class="ic" style="left:66px;top:1520px" width="80" height="80" viewBox="0 0 80 80"><defs><clipPath id="kc"><circle cx="40" cy="40" r="40"/></clipPath></defs><g clip-path="url(#kc)"><rect x="2.4" y="2" width="73.8" height="75.6" fill="#f8d85b"/><rect x="12.9" y="12.3" width="63.3" height="65.3" fill="#415af4"/><rect x="57" y="2" width="10" height="66" fill="#f8d85b"/><rect x="22.3" y="56.3" width="44.7" height="11.7" fill="#f8d85b"/><rect x="22.3" y="22" width="34.7" height="34.3" fill="#fff"/></g></svg>
<svg class="ic" style="left:512.0px;top:1522px" width="28" height="28" viewBox="0 0 24 24"><rect x="1" y="1" width="22" height="22" fill="#fff"/><path fill="#4c80ea" d="M20.447 20.452h-3.554v-5.569c0-1.328-.027-3.037-1.852-3.037-1.853 0-2.136 1.445-2.136 2.939v5.667H9.351V9h3.414v1.561h.046c.477-.9 1.637-1.85 3.37-1.85 3.601 0 4.267 2.37 4.267 5.455v6.286zM5.337 7.433c-1.144 0-2.063-.926-2.063-2.065 0-1.138.92-2.063 2.063-2.063 1.14 0 2.064.925 2.064 2.063 0 1.139-.925 2.065-2.064 2.065zm1.782 13.019H3.555V9h3.564v11.452zM22.225 0H1.771C.792 0 0 .774 0 1.729v20.542C0 23.227.792 24 1.771 24h20.451C23.2 24 24 23.227 24 22.271V1.729C24 .774 23.2 0 22.222 0h.003z"/></svg>
<div class="tag" style="left:66.0px;top:1620px;width:507.6px"></div>
<svg class="ic" style="left:82px;top:1636px" width="32" height="32" viewBox="0 0 24 24" fill="none" stroke="#18181b" stroke-width="2" stroke-linecap="round" stroke-linejoin="round"><path d="M2 20a2 2 0 0 0 2 2h16a2 2 0 0 0 2-2V8l-7 5V8l-7 5V4a2 2 0 0 0-2-2H4a2 2 0 0 0-2 2Z"/><path d="M17 18h1"/><path d="M12 18h1"/><path d="M7 18h1"/></svg>
<div class="tag" style="left:589.8px;top:1620px;width:198.4px"></div>
<svg class="ic" style="left:605.8000000000002px;top:1636px" width="32" height="32" viewBox="0 0 24 24" fill="none" stroke="#18181b" stroke-width="2" stroke-linecap="round" stroke-linejoin="round"><circle cx="12" cy="18" r="3"/><circle cx="6" cy="6" r="3"/><circle cx="18" cy="6" r="3"/><path d="M18 9v2c0 .6-.4 1-1 1H7c-.6 0-1-.4-1-1V9"/><path d="M12 12v3"/></svg>
<div class="tag" style="left:804.4px;top:1620px;width:389.6px"></div>
<svg class="ic" style="left:820.4000000000001px;top:1636px" width="32" height="32" viewBox="0 0 24 24" fill="none" stroke="#18181b" stroke-width="2" stroke-linecap="round" stroke-linejoin="round"><path d="M20 10c0 4.993-5.539 10.193-7.399 11.799a1 1 0 0 1-1.202 0C9.539 20.193 4 14.993 4 10a8 8 0 0 1 16 0"/><circle cx="12" cy="10" r="3"/></svg>
<span class="t " style="left:179.05px;top:1522px;font-size:29px;color:#18181b;letter-spacing:0.705px;-webkit-text-stroke:0.7px #18181b;">Thomas Singerlé-florus</span>
<span class="t " style="left:178.50px;top:1570px;font-size:29px;color:#6b7280;letter-spacing:0.242px;">Software Engineer at Kraaft</span>
<span class="t " style="left:122.30px;top:1640px;font-size:24px;color:#18181b;font-weight:700;letter-spacing:0.137px;">Information Technology And Services</span>
<span class="t " style="left:646.10px;top:1640px;font-size:24px;color:#18181b;font-weight:700;letter-spacing:0.355px;">Entry-level</span>
<span class="t " style="left:860.70px;top:1640px;font-size:24px;color:#18181b;font-weight:700;letter-spacing:0.376px;">Paris, Île-de-france, France</span>
<div class="card" style="left:40px;top:1742px;height:220px"></div>
<svg class="ic" style="left:66px;top:1772px" width="80" height="80" viewBox="0 0 80 80"><circle cx="40" cy="40" r="40" fill="#7671f4"/></svg>
<svg class="ic" style="left:338.0px;top:1774px" width="28" height="28" viewBox="0 0 24 24"><rect x="1" y="1" width="22" height="22" fill="#fff"/><path fill="#4c80ea" d="M20.447 20.452h-3.554v-5.569c0-1.328-.027-3.037-1.852-3.037-1.853 0-2.136 1.445-2.136 2.939v5.667H9.351V9h3.414v1.561h.046c.477-.9 1.637-1.85 3.37-1.85 3.601 0 4.267 2.37 4.267 5.455v6.286zM5.337 7.433c-1.144 0-2.063-.926-2.063-2.065 0-1.138.92-2.063 2.063-2.063 1.14 0 2.064.925 2.064 2.063 0 1.139-.925 2.065-2.064 2.065zm1.782 13.019H3.555V9h3.564v11.452zM22.225 0H1.771C.792 0 0 .774 0 1.729v20.542C0 23.227.792 24 1.771 24h20.451C23.2 24 24 23.227 24 22.271V1.729C24 .774 23.2 0 22.222 0h.003z"/></svg>
<span class="t " style="left:177.05px;top:1774px;font-size:29px;color:#18181b;letter-spacing:0.068px;-webkit-text-stroke:0.7px #18181b;">Evan Babb</span>
</section>
<svg id="chat" viewBox="0 0 90 90" style="overflow:visible"><circle cx="45" cy="45" r="45" fill="#000"/><circle cx="45.1" cy="42.8" r="22.7" fill="#fff"/><path d="M47.5 64 56.4 72.6V60z" fill="#fff"/><g stroke="#000" stroke-width="4.4" stroke-linecap="round"><path d="M34.5 31h8M29 39.900h13.500M29.700 48.600h12.800"/></g><circle cx="81" cy="17" r="18" fill="#d63025" style="filter:drop-shadow(0 1px 2px rgba(0,0,0,.35))"/><polygon fill="#fff" points="81.3,7.8 84.4,7.8 84.4,26.1 81,26.1 81,11.9 77.6,13.7 76.5,10.6"/></svg>
<div id="frame"></div></div></body></html>
